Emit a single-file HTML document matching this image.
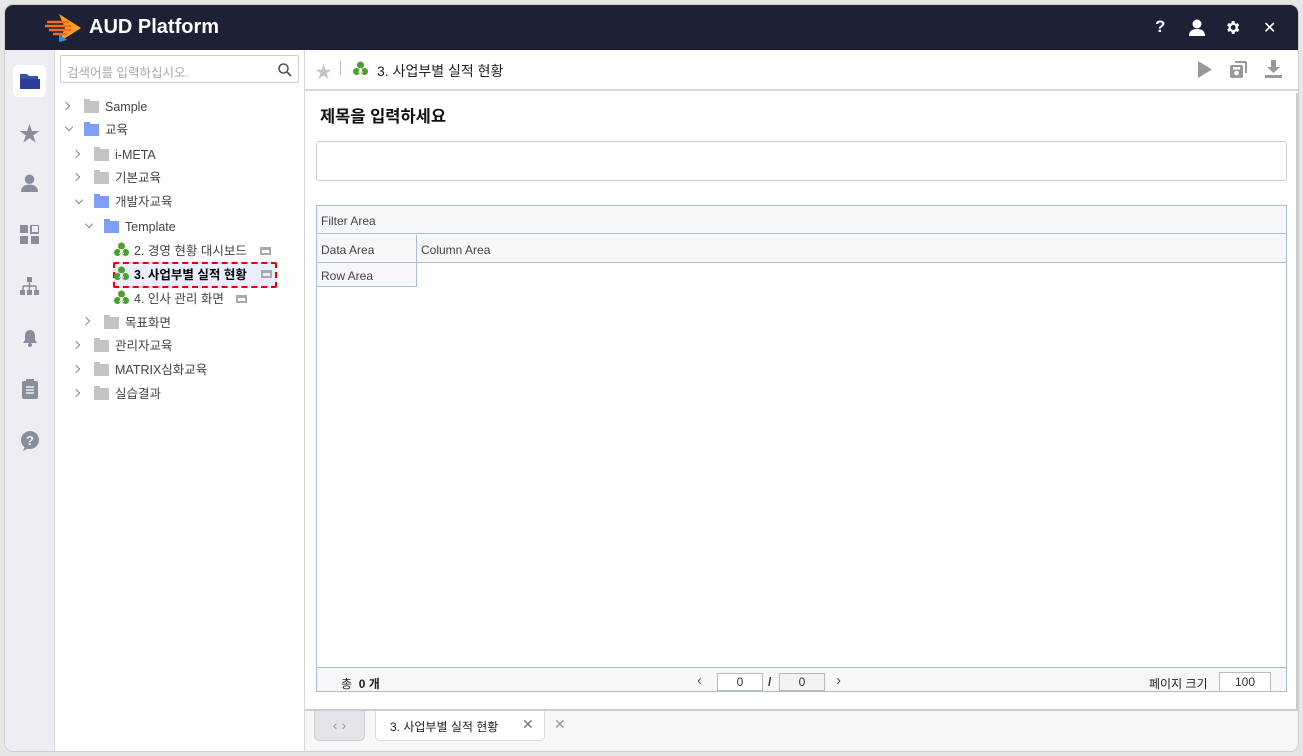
<!DOCTYPE html>
<html><head><meta charset="utf-8"><style>
*{box-sizing:border-box;margin:0;padding:0}
body{width:1303px;height:756px;background:#e6e6e6;font-family:"Liberation Sans","Noto Sans CJK KR",sans-serif;position:relative;overflow:hidden;font-size:12px;color:#333}
.a{position:absolute}
#win{left:5px;top:5px;width:1293px;height:746px;background:#fff;border-radius:8px;overflow:hidden;box-shadow:0 0 0 1px #d0d0d0}
#hdr{left:0;top:0;width:1293px;height:45px;background:#1c2136}
#side{left:0;top:45px;width:50px;height:701px;background:#ededf2;border-right:1px solid #d8d8d8}
#tree{left:50px;top:45px;width:250px;height:701px;background:#fff;border-right:1px solid #d8d8d8}
.ti{position:absolute;font-size:12.5px;color:#444;white-space:nowrap;height:16px;line-height:16px}
.ch{position:absolute;width:8px;height:8px;border-right:1.5px solid #888;border-bottom:1.5px solid #888}
.cr{transform:rotate(-45deg)}
.cd{transform:rotate(45deg)}
.fd{position:absolute;width:15px;height:12px;background:#c4c4c4}
.fd:before{content:"";position:absolute;left:0;top:-2px;width:6px;height:3px;background:inherit}
.fb{background:#7f9ef5}
.ic{position:absolute;color:#8a8d9e}
.gi{position:absolute;width:15px;height:15px}
.mini{position:absolute;width:11px;height:8px;border:2px solid #aaa;border-top-width:3px;}
</style></head><body>
<div id="win" class="a">
 <div id="hdr" class="a">
  <svg class="a" style="left:40px;top:9px" width="40" height="28" viewBox="0 0 40 28"><path d="M14 0 L36 14 L14 28 L20 14Z" fill="#f7a21b"/><path d="M2 8 H24 M0 12 H26 M4 16 H26 M8 20 H22" stroke="#f36b21" stroke-width="2.5"/><path d="M14 20 L22 26 L14 28Z" fill="#2d8fe0"/></svg>
  <div class="a" style="left:84px;top:11px;color:#fff;font-size:20px;font-weight:bold">AUD Platform</div>
  <div class="a" style="left:1150px;top:12px;color:#fff;font-size:17px;font-weight:bold">?</div>
  <svg class="a" style="left:1183px;top:14px" width="18" height="17" viewBox="0 0 18 17"><circle cx="9" cy="5" r="4.5" fill="#fff"/><path d="M1 17 Q1 10 9 10 Q17 10 17 17Z" fill="#fff"/></svg>
  <svg class="a" style="left:1219px;top:14px" width="17" height="17" viewBox="0 0 24 24"><path fill="#fff" d="M19.4 13a7.5 7.5 0 000-2l2.1-1.6-2-3.5-2.5 1a7 7 0 00-1.7-1L15 3h-4l-.4 2.7a7 7 0 00-1.7 1l-2.5-1-2 3.5L6.6 11a7.5 7.5 0 000 2l-2.1 1.6 2 3.5 2.5-1a7 7 0 001.7 1L11 21h4l.4-2.7a7 7 0 001.7-1l2.5 1 2-3.5zM13 15.5A3.5 3.5 0 1113 8.5a3.5 3.5 0 010 7z"/></svg>
  <div class="a" style="left:1258px;top:13px;color:#fff;font-size:16px">✕</div>
 </div>
 <div id="side" class="a">
  <div class="a" style="left:8px;top:15px;width:33px;height:32px;background:#fff;border-radius:5px"></div>
  <svg class="a" style="left:15px;top:23px" width="20" height="16" viewBox="0 0 20 16"><path d="M0 1h7l2 2h9v3H0z" fill="#3b4fa8"/><path d="M0 6h20v10H0z" fill="#2b3f9a"/></svg>
  <div class="ic" style="left:14px;top:68px;font-size:21px">★</div>
  <svg class="a" style="left:15px;top:124px" width="19" height="18" viewBox="0 0 18 17"><circle cx="9" cy="5" r="4.5" fill="#8a8d9e"/><path d="M1 17 Q1 10 9 10 Q17 10 17 17Z" fill="#8a8d9e"/></svg>
  <svg class="a" style="left:15px;top:175px" width="19" height="19"><rect x="0" y="0" width="8" height="8" fill="#8a8d9e"/><rect x="11" y="0" width="8" height="8" fill="none" stroke="#8a8d9e" stroke-width="2"/><rect x="0" y="11" width="8" height="8" fill="#8a8d9e"/><rect x="11" y="11" width="8" height="8" fill="#8a8d9e"/></svg>
  <svg class="a" style="left:15px;top:227px" width="19" height="19"><rect x="7" y="0" width="5" height="5" fill="#8a8d9e"/><path d="M9.5 5v4M3 9h13M3 9v4M9.5 9v4M16 9v4" stroke="#8a8d9e" stroke-width="1.5"/><rect x="0" y="13" width="5" height="5" fill="#8a8d9e"/><rect x="7" y="13" width="5" height="5" fill="#8a8d9e"/><rect x="14" y="13" width="5" height="5" fill="#8a8d9e"/></svg>
  <svg class="a" style="left:15px;top:278px" width="20" height="20" viewBox="0 0 20 20"><path d="M10 2a5 5 0 00-5 5v5l-2 3h14l-2-3V7a5 5 0 00-5-5z" fill="#8a8d9e"/><circle cx="10" cy="17" r="2" fill="#8a8d9e"/></svg>
  <svg class="a" style="left:17px;top:329px" width="16" height="20"><rect x="0" y="2" width="16" height="18" rx="2" fill="#8a8d9e"/><rect x="4" y="0" width="8" height="4" fill="#8a8d9e"/><path d="M4 8h8M4 11h8M4 14h8" stroke="#ededf2" stroke-width="1.5"/></svg>
  <svg class="a" style="left:15px;top:381px" width="20" height="20"><circle cx="10" cy="9" r="9" fill="#8a8d9e"/><path d="M5 15l-2 5 6-3z" fill="#8a8d9e"/><text x="10" y="14" font-size="13" font-weight="bold" fill="#ededf2" text-anchor="middle" font-family="Liberation Sans">?</text></svg>
 </div>
 <div id="tree" class="a">
  <div class="a" style="left:5px;top:5px;width:239px;height:28px;border:1px solid #ccc;border-radius:2px"></div>
  <div class="a" style="left:12px;top:12px;color:#aaa;font-size:12.5px">검색어를 입력하십시오.</div>
  <svg class="a" style="left:223px;top:13px" width="14" height="14"><circle cx="5.5" cy="5.5" r="4.5" fill="none" stroke="#555" stroke-width="1.6"/><path d="M9 9l4 4" stroke="#555" stroke-width="1.8"/></svg>
 </div>
 <div class="ch cr" style="left:58px;top:98px;width:6px;height:6px"></div><div class="fd" style="left:79px;top:96px"></div><div class="ti" style="left:100px;top:94px">Sample</div>
 <div class="ch cd" style="left:61px;top:119px;width:6px;height:6px"></div><div class="fd fb" style="left:79px;top:119px"></div><div class="ti" style="left:100px;top:117px">교육</div>
 <div class="ch cr" style="left:68px;top:146px;width:6px;height:6px"></div><div class="fd" style="left:89px;top:144px"></div><div class="ti" style="left:110px;top:142px">i-META</div>
 <div class="ch cr" style="left:68px;top:169px;width:6px;height:6px"></div><div class="fd" style="left:89px;top:167px"></div><div class="ti" style="left:110px;top:165px">기본교육</div>
 <div class="ch cd" style="left:71px;top:192px;width:6px;height:6px"></div><div class="fd fb" style="left:89px;top:191px"></div><div class="ti" style="left:110px;top:189px">개발자교육</div>
 <div class="ch cd" style="left:81px;top:216px;width:6px;height:6px"></div><div class="fd fb" style="left:99px;top:216px"></div><div class="ti" style="left:120px;top:214px">Template</div>
 <div class="a" style="left:108px;top:257px;width:164px;height:26px;border:2px dashed #e00;background:#e8eefc;border-radius:2px"></div>
 <svg class="gi" style="left:109px;top:237px" viewBox="0 0 15 15"><circle cx="7.5" cy="4" r="3.5" fill="#4aa02c"/><circle cx="3.5" cy="10.5" r="3.5" fill="#4aa02c"/><circle cx="11.5" cy="10.5" r="3.5" fill="#4aa02c"/><text x="7.5" y="12" font-size="7" fill="#fff" text-anchor="middle" font-weight="bold">A</text></svg>
 <div class="ti" style="left:129px;top:238px">2. 경영 현황 대시보드</div><div class="mini" style="left:255px;top:242px"></div>
 <svg class="gi" style="left:109px;top:261px" viewBox="0 0 15 15"><circle cx="7.5" cy="4" r="3.5" fill="#4aa02c"/><circle cx="3.5" cy="10.5" r="3.5" fill="#4aa02c"/><circle cx="11.5" cy="10.5" r="3.5" fill="#4aa02c"/><text x="7.5" y="12" font-size="7" fill="#fff" text-anchor="middle" font-weight="bold">A</text></svg>
 <div class="ti" style="left:129px;top:262px;color:#000;font-weight:bold">3. 사업부별 실적 현황</div><div class="mini" style="left:256px;top:265px"></div>
 <svg class="gi" style="left:109px;top:285px" viewBox="0 0 15 15"><circle cx="7.5" cy="4" r="3.5" fill="#4aa02c"/><circle cx="3.5" cy="10.5" r="3.5" fill="#4aa02c"/><circle cx="11.5" cy="10.5" r="3.5" fill="#4aa02c"/><text x="7.5" y="12" font-size="7" fill="#fff" text-anchor="middle" font-weight="bold">A</text></svg>
 <div class="ti" style="left:129px;top:286px">4. 인사 관리 화면</div><div class="mini" style="left:231px;top:290px"></div>
 <div class="ch cr" style="left:78px;top:313px;width:6px;height:6px"></div><div class="fd" style="left:99px;top:312px"></div><div class="ti" style="left:120px;top:310px">목표화면</div>
 <div class="ch cr" style="left:68px;top:337px;width:6px;height:6px"></div><div class="fd" style="left:89px;top:335px"></div><div class="ti" style="left:110px;top:333px">관리자교육</div>
 <div class="ch cr" style="left:68px;top:361px;width:6px;height:6px"></div><div class="fd" style="left:89px;top:359px"></div><div class="ti" style="left:110px;top:357px">MATRIX심화교육</div>
 <div class="ch cr" style="left:68px;top:385px;width:6px;height:6px"></div><div class="fd" style="left:89px;top:383px"></div><div class="ti" style="left:110px;top:381px">실습결과</div>

 <!-- main -->
 <div class="a" style="left:300px;top:45px;width:993px;height:41px;border-bottom:2px solid #d8d8d8;background:#fff"></div>
 <div class="a" style="left:310px;top:53px;color:#c4c4c4;font-size:17px">★</div>
 <div class="a" style="left:335px;top:56px;width:1px;height:14px;background:#bbb"></div>
 <svg class="gi" style="left:348px;top:56px" viewBox="0 0 15 15"><circle cx="7.5" cy="4" r="3.5" fill="#4aa02c"/><circle cx="3.5" cy="10.5" r="3.5" fill="#4aa02c"/><circle cx="11.5" cy="10.5" r="3.5" fill="#4aa02c"/><text x="7.5" y="12" font-size="7" fill="#fff" text-anchor="middle" font-weight="bold">A</text></svg>
 <div class="a" style="left:372px;top:56px;font-size:14px;color:#222">3. 사업부별 실적 현황</div>
 <svg class="a" style="left:1192px;top:56px" width="16" height="17"><path d="M1 0l14 8.5L1 17z" fill="#999"/></svg>
 <svg class="a" style="left:1225px;top:56px" width="17" height="17"><path d="M5 0h10a2 2 0 012 2v10h-2V2H5z" fill="#999"/><rect x="0" y="4" width="13" height="13" rx="2" fill="#999"/><circle cx="6.5" cy="12" r="2.3" fill="#fff"/><rect x="3" y="6" width="7" height="2.5" fill="#fff"/></svg>
 <svg class="a" style="left:1260px;top:55px" width="17" height="18"><path d="M6 0h5v7h4l-6.5 6L2 7h4z" fill="#999"/><rect x="0" y="15" width="17" height="3" fill="#999"/></svg>
 <div class="a" style="left:300px;top:88px;width:993px;height:618px;border-right:2px solid #ccc;border-bottom:2px solid #ccc"></div>
 <div class="a" style="left:315px;top:98px;font-size:16.5px;color:#111;font-weight:bold">제목을 입력하세요</div>
 <div class="a" style="left:311px;top:136px;width:971px;height:40px;border:1px solid #ccc;border-radius:3px"></div>
 <div class="a" style="left:311px;top:200px;width:971px;height:487px;border:1px solid #a4c0dd"></div>
 <div class="a" style="left:312px;top:201px;width:969px;height:28px;background:#f7f7fa;border-bottom:1px solid #a4c0dd;padding:8px 4px;color:#444">Filter Area</div>
 <div class="a" style="left:312px;top:230px;width:969px;height:28px;background:#f7f7fa;border-bottom:1px solid #a4c0dd"></div>
 <div class="a" style="left:312px;top:258px;width:99px;height:23px;background:#f7f7fa"></div>
 <div class="a" style="left:312px;top:230px;width:100px;height:52px;border-right:1px solid #a4c0dd;border-bottom:1px solid #a4c0dd"></div>
 <div class="a" style="left:312px;top:230px;width:100px;height:28px;border-bottom:1px solid #a4c0dd"></div>
 <div class="a" style="left:316px;top:238px;color:#444">Data Area</div>
 <div class="a" style="left:416px;top:238px;color:#444">Column Area</div>
 <div class="a" style="left:316px;top:264px;color:#444">Row Area</div>
 <div class="a" style="left:312px;top:662px;width:969px;height:24px;background:#f7f7fa;border-top:1px solid #a4c0dd"></div>
 <div class="a" style="left:336px;top:670px;color:#222">총 <b>&nbsp;0 개</b></div>
 <div class="a" style="left:692px;top:667px;color:#555;font-size:15px">‹</div>
 <div class="a" style="left:712px;top:668px;width:46px;height:18px;border:1px solid #bbb;background:#fff;text-align:center;line-height:16px">0</div>
 <div class="a" style="left:763px;top:670px;font-weight:bold">/</div>
 <div class="a" style="left:774px;top:668px;width:46px;height:18px;border:1px solid #bbb;background:#f3f3f3;text-align:center;line-height:16px">0</div>
 <div class="a" style="left:831px;top:667px;color:#555;font-size:15px">›</div>
 <div class="a" style="left:1144px;top:670px;color:#222">페이지 크기</div>
 <div class="a" style="left:1214px;top:667px;width:52px;height:20px;border:1px solid #bbb;background:#fff;text-align:center;line-height:18px">100</div>
 <div class="a" style="left:300px;top:706px;width:993px;height:40px;background:#f7f7fa"></div>
 <div class="a" style="left:309px;top:706px;width:51px;height:30px;background:#e4e4ea;border:1px solid #ccc;border-top:none;border-radius:0 0 5px 5px;color:#999;text-align:center;line-height:28px;font-size:14px">‹ ›</div>
 <div class="a" style="left:370px;top:706px;width:170px;height:30px;background:#fff;border:1px solid #ddd;border-top:none;border-radius:0 0 5px 5px"></div>
 <div class="a" style="left:385px;top:713px;color:#222">3. 사업부별 실적 현황</div>
 <div class="a" style="left:517px;top:711px;color:#777;font-size:14px">✕</div>
 <div class="a" style="left:549px;top:711px;color:#999;font-size:14px">✕</div>
</div>
</body></html>
